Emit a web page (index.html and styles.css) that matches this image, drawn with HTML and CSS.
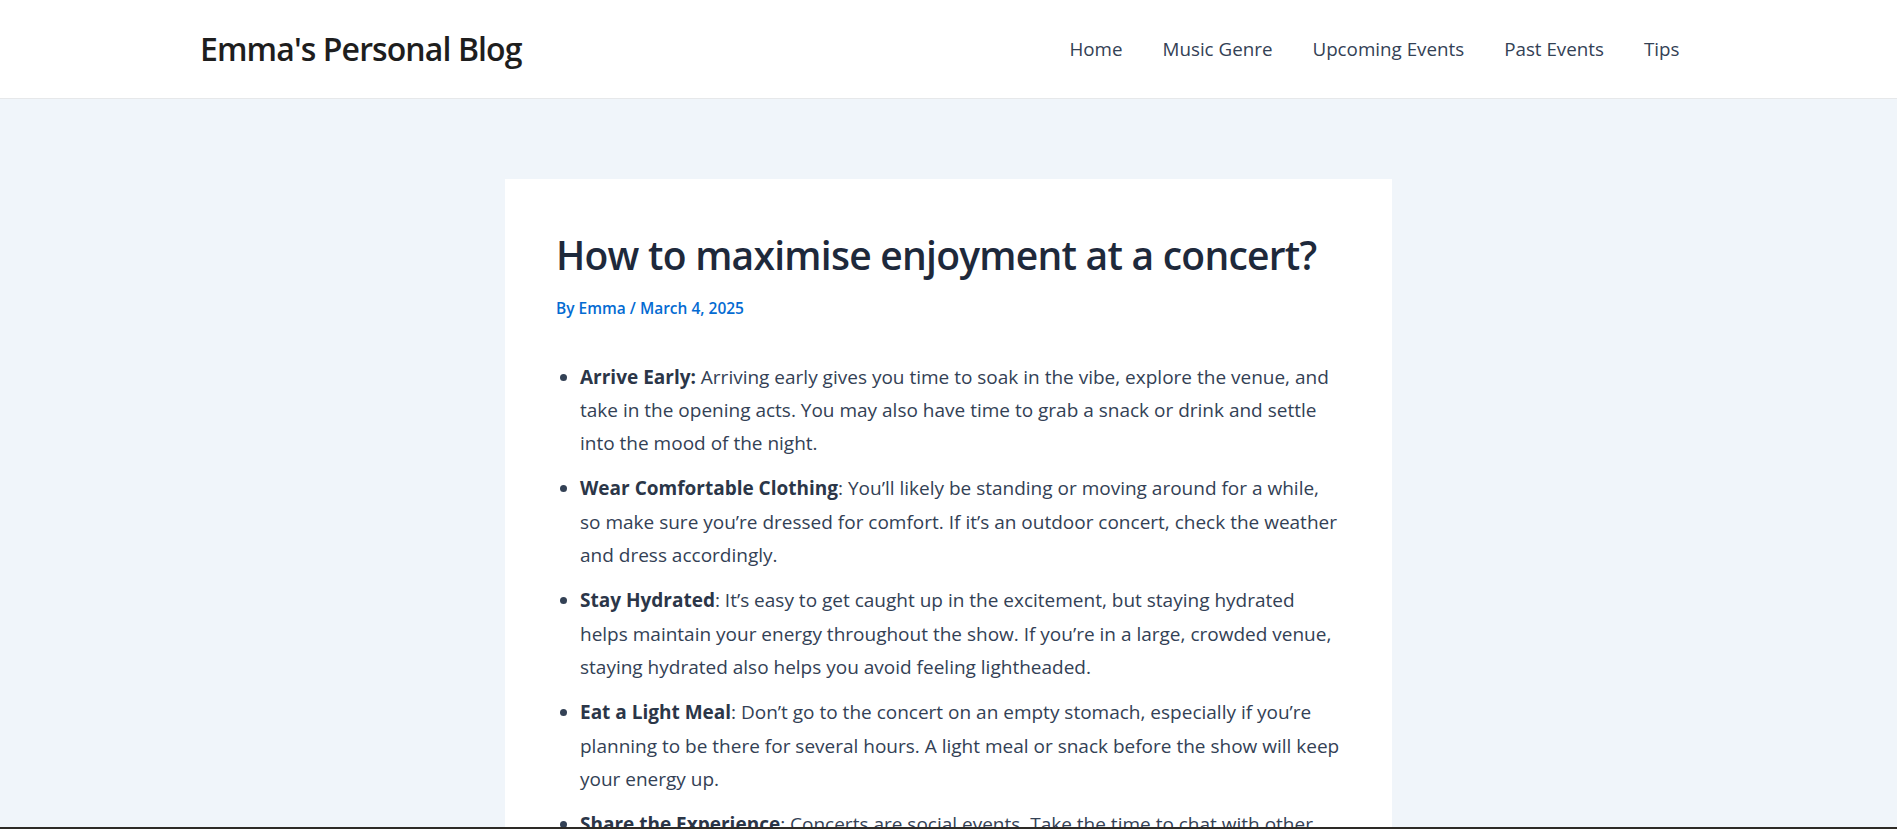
FILE: index.html
```html
<!DOCTYPE html>
<html lang="en">
<head>
<meta charset="utf-8">
<title>How to maximise enjoyment at a concert? – Emma's Personal Blog</title>
<link rel="stylesheet" href="styles.css">
</head>
<body>
<header class="site-header">
  <div class="header-inner">
    <a class="site-title" href="#">Emma's Personal Blog</a>
    <nav class="main-nav">
      <a class="nav-link" href="#">Home</a>
      <a class="nav-link" href="#">Music Genre</a>
      <a class="nav-link" href="#">Upcoming Events</a>
      <a class="nav-link" href="#">Past Events</a>
      <a class="nav-link" href="#">Tips</a>
    </nav>
  </div>
</header>
<main class="site-main">
  <article class="post-card">
    <h1 class="post-title">How to maximise enjoyment at a concert?</h1>
    <div class="post-meta">By <a href="#">Emma</a> / March 4, 2025</div>
    <ul class="post-list">
      <li><strong>Arrive Early:</strong> Arriving early gives you time to soak in the vibe, explore the venue, and take in the opening acts. You may also have time to grab a snack or drink and settle into the mood of the night.</li>
      <li><strong>Wear Comfortable Clothing</strong>: You’ll likely be standing or moving around for a while, so make sure you’re dressed for comfort. If it’s an outdoor concert, check the weather and dress accordingly.</li>
      <li><strong>Stay Hydrated</strong>: It’s easy to get caught up in the excitement, but staying hydrated helps maintain your energy throughout the show. If you’re in a large, crowded venue, staying hydrated also helps you avoid feeling lightheaded.</li>
      <li><strong>Eat a Light Meal</strong>: Don’t go to the concert on an empty stomach, especially if you’re planning to be there for several hours. A light meal or snack before the show will keep your energy up.</li>
      <li><strong>Share the Experience</strong>: Concerts are social events. Take the time to chat with other fans, sing along together and share the moment with the people around you.</li>
    </ul>
  </article>
</main>
<div class="screen-edge"></div>
</body>
</html>
```
FILE: styles.css
```css
* { box-sizing: border-box; }
html, body { margin: 0; padding: 0; }
body {
  background: #f0f5fa;
  color: #334155;
  font-family: "Open Sans", "Noto Sans", sans-serif;
  font-size: 19px;
}
a { text-decoration: none; color: inherit; }

.site-header {
  background: #ffffff;
  border-bottom: 1px solid #e6e8ea;
}
.header-inner {
  max-width: 1497px;
  height: 98px;
  margin: 0 auto;
  display: flex;
  align-items: center;
  justify-content: space-between;
}
.site-title {
  font-size: 32px;
  font-weight: 600;
  letter-spacing: -0.9px;
  color: #1e1e1e;
  line-height: 1.2;
}
.main-nav {
  display: flex;
  align-items: center;
}
.nav-link {
  font-size: 18.8px;
  color: #334155;
  padding: 0 20px;
  line-height: 1.5;
}
.nav-link:last-child {
  padding-right: 17.5px;
}

.site-main {
  padding: 80px 0 40px;
}
.post-card {
  width: 887px;
  margin: 0 auto;
  background: #ffffff;
  padding: 53px 51px 60px;
}
.post-title {
  margin: 0 0 17px;
  font-size: 39px;
  font-weight: 600;
  letter-spacing: -0.75px;
  line-height: 1.2;
  color: #1e293b;
}
.post-meta {
  font-size: 15.5px;
  font-weight: 600;
  line-height: 1.6;
  color: #046bd2;
  margin-bottom: 40px;
}
.post-list {
  margin: 0;
  padding-left: 24px;
  line-height: 33.3px;
}
.post-list li {
  margin-bottom: 12px;
}
.post-list strong {
  font-weight: 700;
  color: #2b3648;
}
.screen-edge {
  position: fixed;
  left: 0;
  right: 0;
  bottom: 0;
  height: 2px;
  background: #2d2a26;
}
```
